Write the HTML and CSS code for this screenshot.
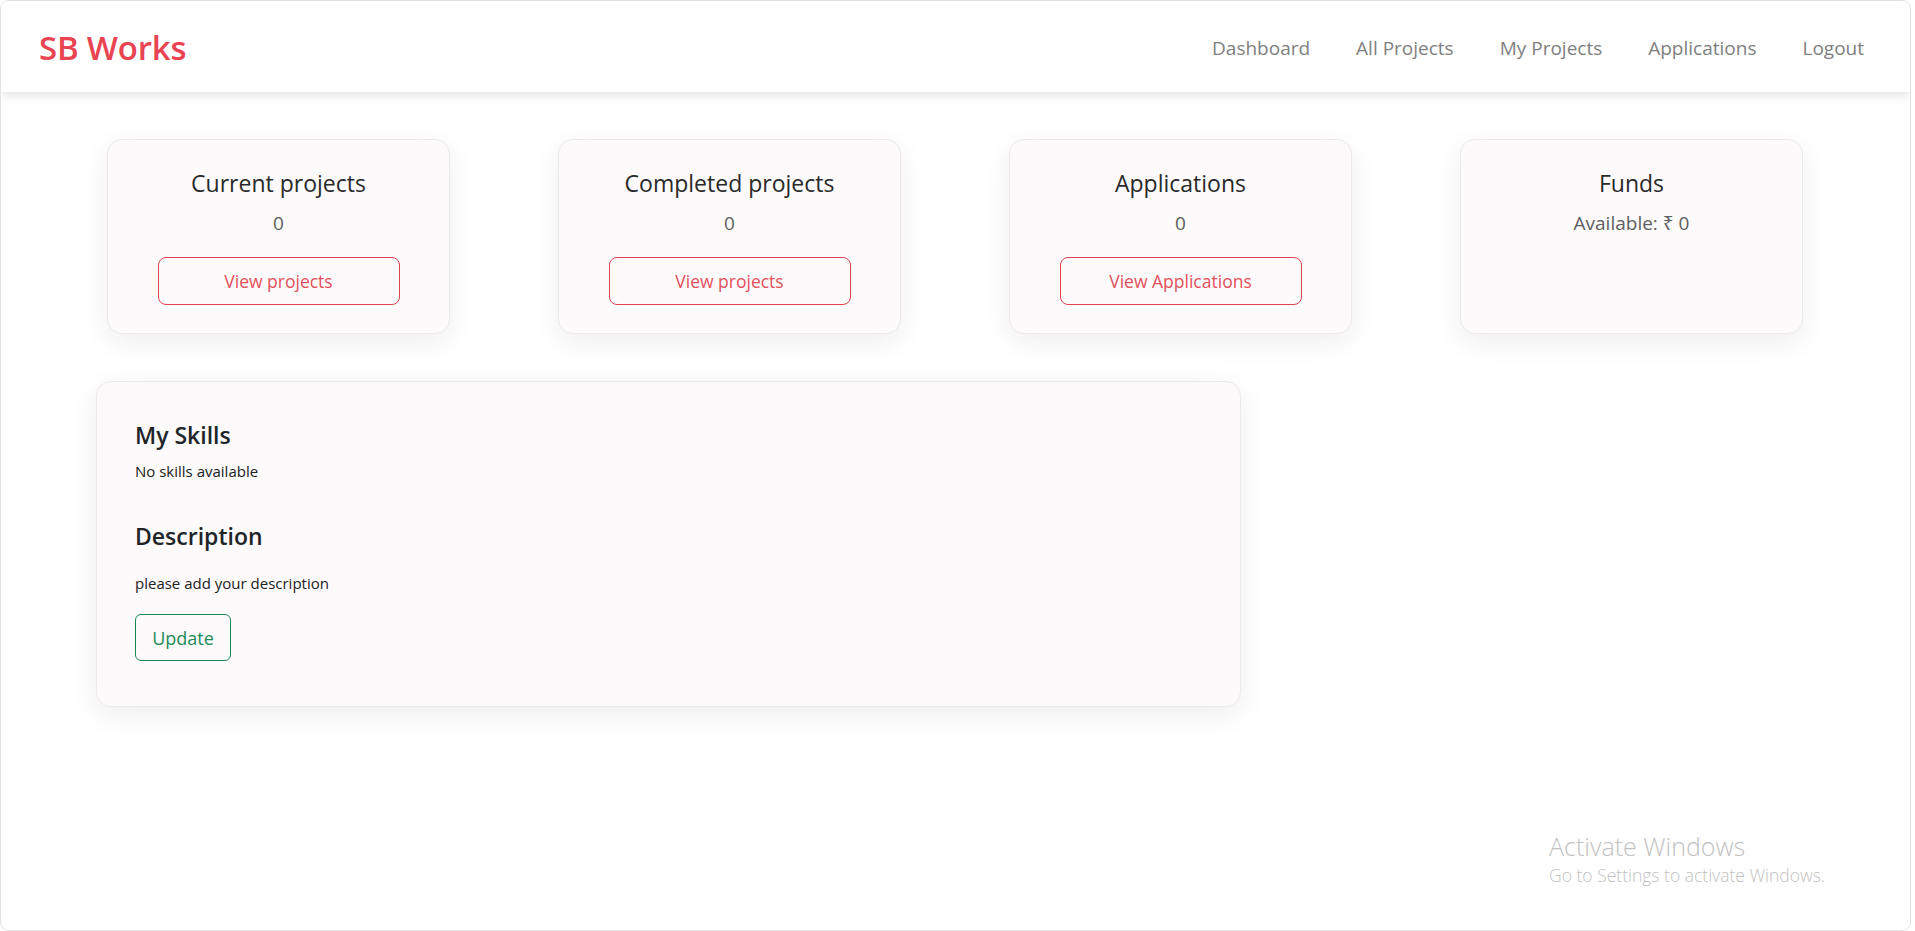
FILE: index.html
```html
<!DOCTYPE html>
<html lang="en">
<head>
<meta charset="utf-8">
<title>SB Works</title>
<link rel="stylesheet" href="styles.css">
</head>
<body>
<div class="window">
  <nav class="navbar">
    <span class="brand">SB Works</span>
    <ul class="nav-links">
      <li><a href="#">Dashboard</a></li>
      <li><a href="#">All Projects</a></li>
      <li><a href="#">My Projects</a></li>
      <li><a href="#">Applications</a></li>
      <li><a href="#">Logout</a></li>
    </ul>
  </nav>
  <main class="content">
    <section class="stats">
      <div class="stat-card">
        <h5 class="stat-title">Current projects</h5>
        <p class="stat-value">0</p>
        <button class="btn-outline-red">View projects</button>
      </div>
      <div class="stat-card">
        <h5 class="stat-title">Completed projects</h5>
        <p class="stat-value">0</p>
        <button class="btn-outline-red">View projects</button>
      </div>
      <div class="stat-card">
        <h5 class="stat-title">Applications</h5>
        <p class="stat-value">0</p>
        <button class="btn-outline-red">View Applications</button>
      </div>
      <div class="stat-card">
        <h5 class="stat-title">Funds</h5>
        <p class="stat-value">Available: ₹ 0</p>
      </div>
    </section>
    <section class="profile-card">
      <h4 class="section-title">My Skills</h4>
      <p class="small-text skills-text">No skills available</p>
      <h4 class="section-title">Description</h4>
      <p class="small-text desc-text">please add your description</p>
      <button class="btn-outline-green">Update</button>
    </section>
  </main>
  <div class="activate">
    <div class="activate-title">Activate Windows</div>
    <div class="activate-sub">Go to Settings to activate Windows.</div>
  </div>
</div>
</body>
</html>
```

FILE: styles.css
```css
* { box-sizing: border-box; }

html, body {
  margin: 0;
  padding: 0;
  background: #ffffff;
}

body {
  font-family: "Open Sans", "Noto Sans", "Liberation Sans", sans-serif;
  color: #212529;
  width: 1915px;
  height: 931px;
  overflow: hidden;
}

.window {
  position: relative;
  width: 1911px;
  height: 931px;
  border: 1px solid #e2e2e2;
  border-radius: 9px;
  overflow: hidden;
  background: #ffffff;
}

.navbar {
  height: 91px;
  display: flex;
  align-items: center;
  justify-content: space-between;
  padding: 0 46px 0 38px;
  background: #ffffff;
  box-shadow: 0 3px 10px rgba(0, 0, 0, 0.12);
  position: relative;
  z-index: 2;
}

.brand {
  font-size: 33px;
  font-weight: 600;
  color: #ea4452;
  letter-spacing: -0.2px;
  margin-top: 2px;
}

.nav-links {
  list-style: none;
  margin: 0;
  padding: 0;
  display: flex;
  gap: 46px;
  margin-top: 2px;
}

.nav-links a {
  text-decoration: none;
  font-size: 19px;
  color: #808080;
}

.content {
  padding: 47px 0 0 0;
}

.stats {
  display: flex;
  gap: 108px;
  padding-left: 106px;
}

.stat-card {
  width: 343px;
  height: 195px;
  background: #fcfafb;
  border: 1px solid #ebe9ea;
  border-radius: 15px;
  box-shadow: 0 8px 28px rgba(0, 0, 0, 0.07);
  display: flex;
  flex-direction: column;
  align-items: center;
  padding-top: 28px;
}

.stat-title {
  margin: 0;
  font-size: 23px;
  font-weight: 400;
  line-height: 30px;
  color: #2a2a2a;
}

.stat-value {
  margin: 10px 0 0 0;
  font-size: 19px;
  line-height: 30px;
  color: #5f5f5f;
}

.btn-outline-red {
  margin-top: 19px;
  width: 242px;
  height: 48px;
  background: transparent;
  border: 1px solid #e04250;
  border-radius: 8px;
  color: #e4505c;
  font-family: inherit;
  font-size: 17.5px;
}

.profile-card {
  margin: 47px 0 0 95px;
  width: 1145px;
  background: #fcfafb;
  border: 1px solid #ebe9ea;
  border-radius: 15px;
  box-shadow: 0 8px 30px rgba(0, 0, 0, 0.07);
  padding: 38px 38px 45px 38px;
}

.section-title {
  margin: 0;
  font-size: 23px;
  font-weight: 600;
  line-height: 30px;
  color: #212529;
}

.small-text {
  margin: 0;
  font-size: 15px;
  line-height: 25px;
  color: #222;
}

.skills-text {
  margin-top: 9px;
  margin-bottom: 37px;
}

.desc-text {
  margin-top: 20px;
}

.btn-outline-green {
  margin-top: 18px;
  width: 96px;
  height: 47px;
  background: transparent;
  border: 1px solid #198754;
  border-radius: 6px;
  color: #1e8a58;
  font-family: inherit;
  font-size: 18px;
}

.activate {
  position: absolute;
  left: 1548px;
  top: 828px;
  color: #c2c2c2;
}

.activate-title {
  font-size: 25px;
  font-weight: 300;
  line-height: 34px;
}

.activate-sub {
  font-size: 17.5px;
  font-weight: 300;
  line-height: 24px;
}
```
